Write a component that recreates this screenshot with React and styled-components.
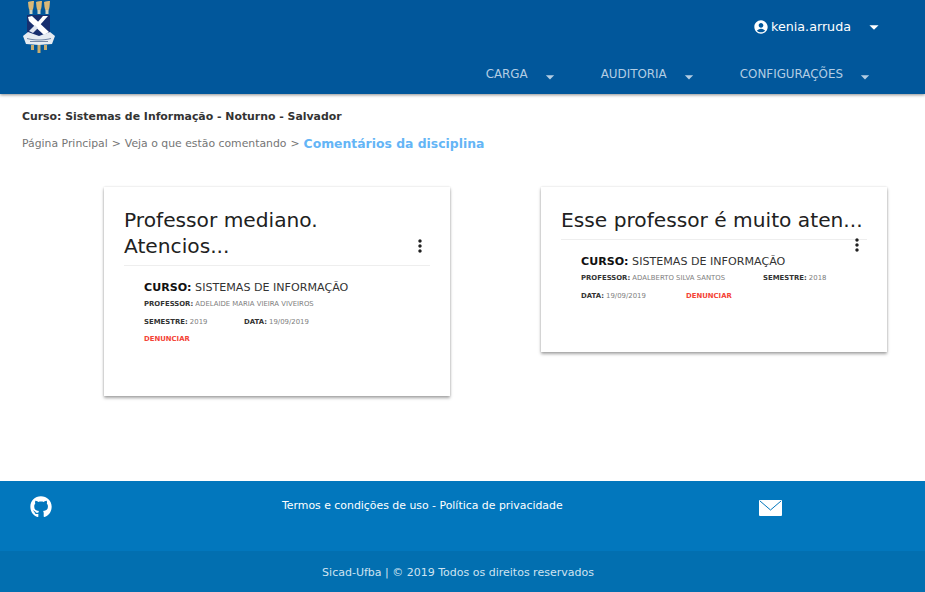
import React from "react";
import styled, { createGlobalStyle } from "styled-components";
import { MdAccountCircle, MdArrowDropDown, MdMoreVert } from "react-icons/md";
import { FaGithub } from "react-icons/fa";

const Global = createGlobalStyle`
  html, body { margin: 0; padding: 0; background: #fff; }
  body { font-family: "DejaVu Sans", Verdana, sans-serif; }
`;

const Page = styled.div`
  width: 925px;
  height: 592px;
  display: flex;
  flex-direction: column;
  overflow: hidden;
`;

const Header = styled.header`
  height: 94px;
  flex: none;
  background: #01579b;
  box-shadow: 0 1px 3px rgba(0, 0, 0, 0.45);
  display: flex;
  justify-content: space-between;
  padding: 0 40px 0 22px;
  box-sizing: border-box;
`;

const HeaderRight = styled.div`
  display: flex;
  flex-direction: column;
  align-items: flex-end;
`;

const UserMenu = styled.div`
  height: 53px;
  display: flex;
  align-items: center;
  color: #fff;
  font-size: 12.7px;
  svg:first-child { margin-right: 2px; }
  svg:last-child { margin-left: 12px; }
`;

const Nav = styled.nav`
  display: flex;
  gap: 41px;
  margin: 1px 10px 0 0;
`;

const NavItem = styled.div`
  display: flex;
  align-items: center;
  color: #b3cde3;
  font-size: 11.9px;
  height: 39px;
  svg { margin: 6px 0 0 12px; }
`;

const Main = styled.main`
  flex: 1;
  padding: 16px 22px 0;
`;

const CourseTitle = styled.div`
  font-size: 10.9px;
  line-height: 14px;
  font-weight: 700;
  color: #333;
`;

const Breadcrumb = styled.div`
  display: flex;
  align-items: center;
  gap: 4px;
  height: 16px;
  margin-top: 11px;
  font-size: 10.85px;
  color: #757575;
`;

const Current = styled.span`
  color: #64b5f6;
  font-size: 12.4px;
  font-weight: 700;
`;

const Cards = styled.div`
  display: flex;
  align-items: flex-start;
  gap: 91px;
  margin: 36px 16px 0 82px;
`;

const Card = styled.article`
  width: 346px;
  height: ${(p) => p.$height}px;
  flex: none;
  background: #fff;
  box-sizing: border-box;
  padding: 20px 20px 0;
  box-shadow: 0 2px 3px rgba(0, 0, 0, 0.35), 0 0 2px rgba(0, 0, 0, 0.12);
`;

const CardHead = styled.div`
  position: relative;
  border-bottom: 1px solid #eee;
`;

const CardTitle = styled.h2`
  margin: 0;
  font-size: 20.2px;
  line-height: 26px;
  font-weight: 400;
  color: #212121;
  padding-bottom: 6px;
  white-space: nowrap;
`;

const Kebab = styled.div`
  position: absolute;
  right: 0;
  top: ${(p) => p.$top}px;
  width: 20px;
  height: 20px;
  color: #212121;
`;

const CardBody = styled.div`
  padding: 14px 20px 0;
`;

const Course = styled.div`
  font-size: 11.1px;
  line-height: 15px;
  color: #333;
  white-space: nowrap;
  b { color: #111; }
`;

const InfoRow = styled.div`
  display: flex;
  margin-top: ${(p) => p.$gap || 10}px;
  font-size: 6.9px;
  line-height: 8px;
  color: #808080;
  white-space: nowrap;
`;

const Info = styled.span`
  width: ${(p) => p.$width || "auto"};
  b { color: #333; }
`;

const Report = styled.span`
  color: #f44336;
  font-weight: 700;
`;

const Footer = styled.footer`
  height: 111px;
  flex: none;
  display: flex;
  flex-direction: column;
  color: #fff;
`;

const FooterTop = styled.div`
  height: 70px;
  background: #0277bd;
  display: grid;
  grid-template-columns: 252px 1fr auto;
  padding: 0 143px 0 30px;
  font-size: 10.9px;
`;

const FooterLinks = styled.div`
  padding-top: 18px;
`;

const FooterIcon = styled.div`
  padding-top: ${(p) => p.$top}px;
`;

const FooterBottom = styled.div`
  flex: 1;
  background: #026fb0;
  display: flex;
  align-items: center;
  justify-content: center;
  font-size: 11px;
  color: #cfe3f1;
  padding-right: 9px;
  padding-top: 1px;
`;

function Logo() {
  return (
    <svg width="34" height="54" viewBox="0 0 34 54" style={{ display: "block" }}>
      <g fill="#d9b877">
        <path d="M6 2c2-1 4-1 6-1l-.500 6c-.500 3-1.500 4-2.500 4s-2-1-2.500-4z" />
        <path d="M14 2c2-1 4-1 6-1l-.500 6c-.500 3-1.500 4-2.500 4s-2-1-2.500-4z" />
        <path d="M22 2c2-1 4-1 6-1l-.500 6c-.500 3-1.500 4-2.500 4s-2-1-2.500-4z" />
      </g>
      <g fill="#cfd3c4">
        <rect x="7.500" y="10" width="3" height="4" />
        <rect x="15.500" y="10" width="3" height="4" />
        <rect x="23.500" y="10" width="3" height="4" />
      </g>
      <path d="M5 15h23v18l-11.500 5L5 33z" fill="#172f6e" />
      <path d="M6 17l4-1 17 16-5 3L7 21z" fill="#fff" />
      <path d="M26 16l-8 9-3-2 6-7z" fill="#fff" />
      <path d="M7 31l6-6 3 3-5 5z" fill="#dfe6f0" />
      <path d="M1 36l5-4 11 4 11-4 5 4-3 8-13 1-13-1z" fill="#e6ecf2" />
      <path d="M5 38.500c8 2 16 2 24 0M8 41.500h18" stroke="#7187a6" strokeWidth="1" fill="none" />
      <g fill="#c7ad70">
        <rect x="9" y="45" width="3" height="5" />
        <rect x="15.500" y="45" width="3" height="8" />
        <rect x="22" y="45" width="3" height="5" />
      </g>
    </svg>
  );
}

function MailIcon() {
  return (
    <svg width="23" height="16" viewBox="0 0 23 16" style={{ display: "block" }}>
      <rect width="23" height="16" rx="1" fill="#fff" />
      <path d="M1 1l10.500 9L22 1" fill="none" stroke="#0277bd" strokeWidth="1" />
    </svg>
  );
}

function CommentCard({ height, title, kebabTop, children }) {
  return (
    <Card $height={height}>
      <CardHead>
        <CardTitle>{title}</CardTitle>
        <Kebab $top={kebabTop}><MdMoreVert size={20} /></Kebab>
      </CardHead>
      <CardBody>{children}</CardBody>
    </Card>
  );
}

export default function App() {
  return (
    <Page>
      <Global />
      <Header>
        <Logo />
        <HeaderRight>
          <UserMenu>
            <MdAccountCircle size={16} />
            kenia.arruda
            <MdArrowDropDown size={22} />
          </UserMenu>
          <Nav>
            <NavItem>CARGA<MdArrowDropDown size={20} /></NavItem>
            <NavItem>AUDITORIA<MdArrowDropDown size={20} /></NavItem>
            <NavItem>CONFIGURAÇÕES<MdArrowDropDown size={20} /></NavItem>
          </Nav>
        </HeaderRight>
      </Header>
      <Main>
        <CourseTitle>Curso: Sistemas de Informação - Noturno - Salvador</CourseTitle>
        <Breadcrumb>
          <span>Página Principal</span>
          <span>&gt;</span>
          <span>Veja o que estão comentando</span>
          <span>&gt;</span>
          <Current>Comentários da disciplina</Current>
        </Breadcrumb>
        <Cards>
          <CommentCard height={209} title={<>Professor mediano.<br />Atencios...</>} kebabTop={29}>
            <Course><b>CURSO:</b> SISTEMAS DE INFORMAÇÃO</Course>
            <InfoRow $gap={5}><Info><b>PROFESSOR:</b> ADELAIDE MARIA VIEIRA VIVEIROS</Info></InfoRow>
            <InfoRow><Info $width="100px"><b>SEMESTRE:</b> 2019</Info><Info><b>DATA:</b> 19/09/2019</Info></InfoRow>
            <InfoRow $gap={9}><Report>DENUNCIAR</Report></InfoRow>
          </CommentCard>
          <CommentCard height={165} title="Esse professor é muito aten..." kebabTop={28}>
            <Course><b>CURSO:</b> SISTEMAS DE INFORMAÇÃO</Course>
            <InfoRow $gap={5}><Info $width="182px"><b>PROFESSOR:</b> ADALBERTO SILVA SANTOS</Info><Info><b>SEMESTRE:</b> 2018</Info></InfoRow>
            <InfoRow><Info $width="105px"><b>DATA:</b> 19/09/2019</Info><Report>DENUNCIAR</Report></InfoRow>
          </CommentCard>
        </Cards>
      </Main>
      <Footer>
        <FooterTop>
          <FooterIcon $top={15}><FaGithub size={22} /></FooterIcon>
          <FooterLinks>Termos e condições de uso - Política de privacidade</FooterLinks>
          <FooterIcon $top={19}><MailIcon /></FooterIcon>
        </FooterTop>
        <FooterBottom>Sicad-Ufba | © 2019 Todos os direitos reservados</FooterBottom>
      </Footer>
    </Page>
  );
}
